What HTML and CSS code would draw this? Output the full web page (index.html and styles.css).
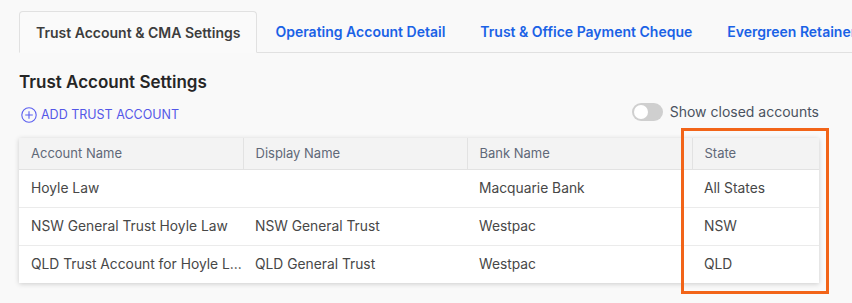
FILE: index.html
```html
<!DOCTYPE html>
<html lang="en">
<head>
<meta charset="utf-8">
<link rel="stylesheet" href="styles.css">
</head>
<body>
<div class="page">
  <nav class="tabs">
    <div class="tab active">Trust Account &amp; CMA Settings</div>
    <div class="tab">Operating Account Detail</div>
    <div class="tab">Trust &amp; Office Payment Cheque</div>
    <div class="tab">Evergreen Retainer</div>
    <div class="tab-fill"></div>
  </nav>
  <section class="content">
    <h2 class="title">Trust Account Settings</h2>
    <div class="actions">
      <a class="add-btn">
        <svg class="add-icon" width="16" height="16" viewBox="0 0 16 16"><circle cx="8" cy="8" r="7.2" fill="none" stroke="#5b5ff0" stroke-width="1.1"/><path d="M8 4.2v7.6M4.2 8h7.6" stroke="#5b5ff0" stroke-width="1.1"/></svg>
        <span>ADD TRUST ACCOUNT</span>
      </a>
      <label class="toggle-wrap">
        <span class="toggle"><span class="knob"></span></span>
        <span class="toggle-label">Show closed accounts</span>
      </label>
    </div>
    <div class="table-wrap">
      <table class="grid">
        <colgroup><col class="c1"><col class="c2"><col class="c3"><col class="c4"></colgroup>
        <thead>
          <tr><th>Account Name</th><th>Display Name</th><th>Bank Name</th><th>State</th></tr>
        </thead>
        <tbody>
          <tr><td>Hoyle Law</td><td></td><td>Macquarie Bank</td><td>All States</td></tr>
          <tr><td>NSW General Trust Hoyle Law</td><td>NSW General Trust</td><td>Westpac</td><td>NSW</td></tr>
          <tr><td><span class="ellip">QLD Trust Account for Hoyle Law Firm</span></td><td>QLD General Trust</td><td>Westpac</td><td>QLD</td></tr>
        </tbody>
      </table>
      <div class="highlight"></div>
    </div>
  </section>
</div>
</body>
</html>
```
FILE: styles.css
```css
* { box-sizing: border-box; }
html, body { margin: 0; padding: 0; }
body {
  background: #f9f9f9;
  font-family: Inter, "Noto Sans", "Liberation Sans", sans-serif;
  width: 852px;
  height: 303px;
  overflow: hidden;
}
.page { padding-top: 11px; }
.tabs {
  display: flex;
  padding-left: 19px;
  height: 42px;
  white-space: nowrap;
}
.tab {
  display: flex;
  align-items: center;
  padding: 0 17px 0 18px;
  font-size: 14px;
  font-weight: 600;
  color: #1a62e6;
  border-bottom: 1px solid #e1e1e1;
  height: 42px;
}
.tab.active {
  color: #3d3d3d;
  background: #fafafa;
  border: 1px solid #e1e1e1;
  border-bottom-color: transparent;
  border-radius: 4px 4px 0 0;
  padding: 0 16px;
}
.tab-fill { flex: 1; border-bottom: 1px solid #e1e1e1; }
.content { padding: 0 19px; width: 838px; position: relative; }
.title {
  margin: 18px 0 0;
  font-size: 17px;
  font-weight: 600;
  color: #262626;
  line-height: 22px;
}
.actions {
  display: flex;
  justify-content: space-between;
  align-items: flex-start;
  margin-top: 10px;
  height: 35px;
}
.add-btn {
  display: flex;
  align-items: center;
  gap: 4px;
  margin-top: 4px;
  margin-left: 2px;
  color: #5457e8;
  font-size: 12.5px;
  line-height: 16px;
}
.toggle-wrap { display: flex; align-items: center; gap: 7px; }
.toggle {
  width: 31px;
  height: 18px;
  border-radius: 9px;
  background: #cfcfcf;
  position: relative;
}
.knob {
  position: absolute;
  left: 2px; top: 2px;
  width: 14px; height: 14px;
  border-radius: 50%;
  background: #fff;
}
.toggle-label { font-size: 14px; color: #4a5260; line-height: 18px; }
.table-wrap { position: relative; width: 800px; }
.grid {
  width: 800px;
  border-collapse: collapse;
  table-layout: fixed;
  background: #fff;
  box-shadow: 0 1px 5px rgba(0,0,0,0.18);
  font-size: 13.8px;
}
.c1 { width: 224px; } .c2 { width: 224px; } .c3 { width: 225px; } .c4 { width: 127px; }
.grid th {
  background: #f3f3f3;
  height: 31px;
  text-align: left;
  font-weight: 400;
  font-size: 13px;
  color: #5f6878;
  padding: 0 12px;
  border-left: 1px solid #e2e2e2;
  border-bottom: 1px solid #e2e2e2;
}
.grid th:first-child { border-left: none; }
.grid td {
  height: 38px;
  padding: 0 12px;
  color: #474747;
  border-bottom: 1px solid #ebebeb;
  white-space: nowrap;
  overflow: hidden;
}
.grid tbody tr:last-child td { border-bottom: none; }
.ellip { display: block; overflow: hidden; text-overflow: ellipsis; white-space: nowrap; margin-right: -11px; }
.highlight {
  position: absolute;
  left: 662px;
  top: -10px;
  width: 148px;
  height: 166px;
  border: 3px solid #f26418;
  pointer-events: none;
}
```
